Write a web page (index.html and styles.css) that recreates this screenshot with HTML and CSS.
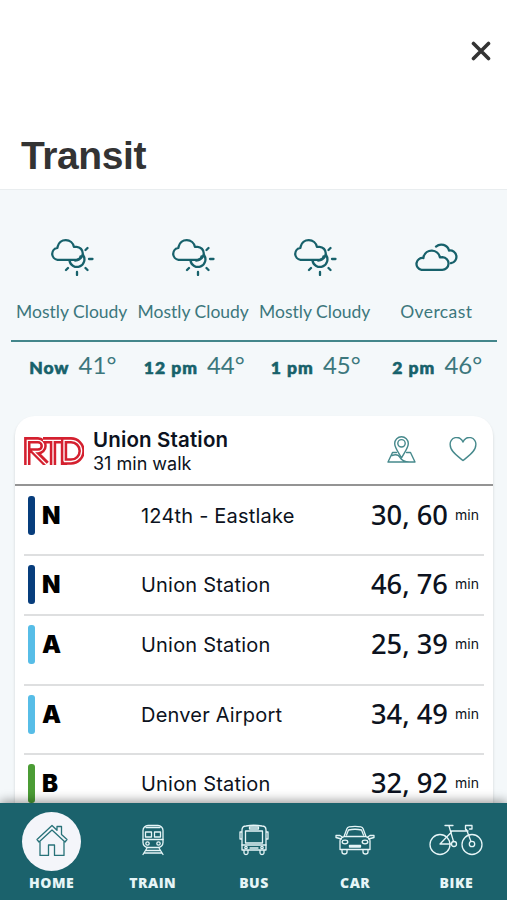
FILE: index.html
```html
<!DOCTYPE html>
<html lang="en">

<head>
    <meta charset="utf-8">
    <title>Transit</title>
    <link rel="stylesheet" href="styles.css">
</head>

<body>
    <!-- shared icons -->
    <svg class="sprite">
        <symbol id="mostlyCloudy" viewBox="0 0 44 38">
            <path d="M7.500 21.800H26a6.500 6.500 0 0 0 .5-13l-2.600.1A8.300 8.300 0 0 0 7.600 8.700l-.2 1.200A6 6 0 0 0 7.500 21.800z"/>
            <path d="M19.500 22.500a7.500 7.500 0 1 0 13.500-5.500M25 22.500q5-.5 5.500-4"/>
            <path d="M35.500 12l2-2M39 21h3.500M35.500 30l2 2M27 34v3M18 30l-2 2"/>
        </symbol>
        <symbol id="overcast" viewBox="0 0 44 38">
            <path d="M7.500 31.800H28a6.300 6.300 0 0 0 .5-12.600l-2.600.1A8.400 8.400 0 0 0 9.600 18.600l-.2 1.400A5.900 5.900 0 0 0 7.500 31.800z"/>
            <path d="M22 8.600A8 8 0 0 1 35 12.500 6.400 6.400 0 0 1 37 25.200"/>
        </symbol>
    </svg>

    <header class="topBar">
        <button class="closeButton" aria-label="Close">
            <svg viewBox="0 0 20 20"><path d="M2.500 2.500l15 15M17.500 2.500l-15 15"/></svg>
        </button>
        <h1>Transit</h1>
    </header>

    <main>
        <section class="weather">
            <div class="conditions">
                <div class="condition"><svg><use href="#mostlyCloudy"/></svg><span>Mostly Cloudy</span></div>
                <div class="condition"><svg><use href="#mostlyCloudy"/></svg><span>Mostly Cloudy</span></div>
                <div class="condition"><svg><use href="#mostlyCloudy"/></svg><span>Mostly Cloudy</span></div>
                <div class="condition overcast"><svg><use href="#overcast"/></svg><span>Overcast</span></div>
            </div>
            <div class="temps">
                <div class="temp"><b>Now</b><span>41°</span></div>
                <div class="temp"><b>12 pm</b><span>44°</span></div>
                <div class="temp"><b>1 pm</b><span>45°</span></div>
                <div class="temp"><b>2 pm</b><span>46°</span></div>
            </div>
        </section>

        <section class="station">
            <div class="stationHeader">
                <svg class="rtdLogo" viewBox="0 0 60 28" role="img" aria-label="RTD">
                    <path class="logoOuter" d="M3.300 28V3.300H14a5.600 5.600 0 0 1 0 11.200H10L22.500 27M19 3.300h18M29 3.300V28M40 28V3.300M37 3.300h10a10.500 10.500 0 0 1 0 21.200h-7"/>
                    <path class="logoInner" d="M3.300 28V3.300H14a5.600 5.600 0 0 1 0 11.200H9.500L23 28M19 3.300h18M29 3.300V28M40 24.500V3.300h7a10.500 10.500 0 0 1 0 21.200h-7"/>
                </svg>
                <div class="stationName">
                    <h2>Union Station</h2>
                    <p>31 min walk</p>
                </div>
                <svg class="mapIcon" viewBox="0 0 29 28">
                    <path d="M14.500 23C12 18 7.700 13 7.700 8.500a6.800 6.800 0 0 1 13.600 0C21.300 13 17 18 14.500 23z"/>
                    <circle cx="14.500" cy="8.300" r="3.700"/>
                    <path d="M9.500 17.500H5.500L1 27h27l-4.500-9.500h-4M5 20.500q6-2 8 2t9.500 4.500"/>
                </svg>
                <svg class="heartIcon" viewBox="0 0 28 25">
                    <path d="M14 23.500C9 19.500 1.200 14.500 1.200 8A6.600 6.600 0 0 1 14 5a6.600 6.600 0 0 1 12.800 3C26.800 14.500 19 19.500 14 23.500z"/>
                </svg>
            </div>
            <ul class="departures">
                <li class="lineN"><i></i><b>N</b><span class="dest">124th - Eastlake</span><span class="times">30, 60</span><small>min</small></li>
                <li class="lineN short"><i></i><b>N</b><span class="dest">Union Station</span><span class="times">46, 76</span><small>min</small></li>
                <li class="lineA tall"><i></i><b>A</b><span class="dest">Union Station</span><span class="times">25, 39</span><small>min</small></li>
                <li class="lineA"><i></i><b>A</b><span class="dest">Denver Airport</span><span class="times">34, 49</span><small>min</small></li>
                <li class="lineB"><i></i><b>B</b><span class="dest">Union Station</span><span class="times">32, 92</span><small>min</small></li>
            </ul>
        </section>
    </main>

    <nav class="tabBar">
        <a class="tab active">
            <span class="tabIcon"><svg width="32" height="32" viewBox="0 0 32 32">
                <path d="M1 15.500L16 1.500l5 4.800V2.500h4.500v8l5.500 5-2 2.500L16 6 3 18z"/>
                <path d="M4 18v13.500h8.500V21h6v10.500H28V18"/>
            </svg></span>
            HOME
        </a>
        <a class="tab">
            <span class="tabIcon"><svg width="24" height="32" viewBox="0 0 24 32">
                <rect x="2" y="1.500" width="20" height="22" rx="5"/>
                <path d="M5 3.500h14M2 15.500h20M6 24l-4 6.500M18 24l4 6.500M5 26.500h14M3.500 29h17"/>
                <rect x="4.500" y="8" width="6" height="5"/><rect x="13.500" y="8" width="6" height="5"/>
                <circle cx="6.500" cy="19.500" r="1.700"/><circle cx="17.500" cy="19.500" r="1.700"/>
            </svg></span>
            TRAIN
        </a>
        <a class="tab">
            <span class="tabIcon"><svg width="32" height="32" viewBox="0 0 32 32">
                <path d="M4 26V6q0-4 4-4 8-1.500 16 0 4 0 4 4v20zM4 8H2v7h2M28 8h2v7h-2M6 26v3q0 1.500 2 1.500t2-1.500v-3M22 26v3q0 1.500 2 1.500t2-1.500v-3"/>
                <rect x="7.500" y="7" width="17" height="12"/><rect x="11.500" y="3" width="9" height="2"/>
                <path d="M4 21h24M12 24h8"/><circle cx="8" cy="23.500" r="1.200"/><circle cx="24" cy="23.500" r="1.200"/>
            </svg></span>
            BUS
        </a>
        <a class="tab">
            <span class="tabIcon"><svg width="40" height="32" viewBox="0 0 40 32">
                <path d="M5 25.500V17q0-3 4-4.500l3-8q.6-1.500 2-1.700 6-1 12 0 1.400.2 2 1.700l3 8q4 1.500 4 4.500v8.500zM9 12.500h22M11.500 11l2-5q6.500-1.500 13 0l2 5M6.500 15L1 13.500v-2h4l3 2M33.500 15l5.500-1.500v-2h-4l-3 2"/>
                <path d="M7 26v2q0 2 2.500 2t2.500-2v-2M28 26v2q0 2 2.500 2t2.500-2v-2M14.500 21.500h11v1.500h-11z"/>
                <ellipse cx="10" cy="18" rx="2.800" ry="1.800"/><ellipse cx="30" cy="18" rx="2.800" ry="1.800"/>
            </svg></span>
            CAR
        </a>
        <a class="tab">
            <span class="tabIcon"><svg width="54" height="32" viewBox="0 0 54 32">
                <circle cx="11" cy="20.500" r="10"/><circle cx="43" cy="20.500" r="10"/>
                <circle cx="25" cy="20" r="2.500"/><circle cx="43" cy="20" r="2.700"/>
                <path d="M16 1.500h8M20 2l4.500 15.500M22.500 8L11 20h11.500M22 7h17M36.500 5.500V1.500H43V5h-2.500M37.500 5.500L42 17.500"/>
            </svg></span>
            BIKE
        </a>
    </nav>
</body>

</html>
```

FILE: styles.css
```css
* {
    box-sizing: border-box;
}

body {
    margin: 0;
    height: 900px;
    display: flex;
    flex-direction: column;
    overflow: hidden;
    background: #f4f8fa;
    color: #0c1220;
    font-family: "Inter", sans-serif;
}

h1, h2, p, ul {
    margin: 0;
    padding: 0;
}

svg {
    display: block;
    fill: none;
    stroke: currentColor;
    stroke-linecap: round;
    stroke-linejoin: round;
}

.sprite {
    display: none;
}

.topBar {
    flex: none;
    height: 190px;
    padding: 41px 16px 0 21px;
    background: #fff;
    border-bottom: 1px solid #e9edef;
    color: #333;
}

.closeButton {
    display: block;
    width: 20px;
    height: 20px;
    margin-left: auto;
    padding: 0;
    border: 0;
    background: none;
    color: #333;
}

.closeButton svg {
    stroke-width: 3.6;
}

.topBar h1 {
    margin-top: 72px;
    font: bold 39px/46px "Liberation Sans", sans-serif;
    letter-spacing: -0.4px;
}

main {
    flex: 1;
    min-height: 0;
    overflow: hidden;
}

.weather {
    margin: 48px 10px 0 11px;
    color: #17616b;
    font-family: Lato, sans-serif;
}

.conditions, .temps {
    display: grid;
    grid-template-columns: repeat(4, 1fr);
}

.conditions {
    height: 104px;
    border-bottom: 2px solid #43868b;
}

.condition {
    display: flex;
    flex-direction: column;
    align-items: center;
    gap: 24px;
    font-size: 17.5px;
    line-height: 24px;
    white-space: nowrap;
    color: #3c777d;
}

.overcast {
    letter-spacing: 0.4px;
}

.condition svg {
    width: 44px;
    height: 38px;
    color: #17616b;
    stroke-width: 2.3;
}

.temps {
    height: 48px;
}

.temp {
    display: flex;
    align-items: baseline;
    justify-content: center;
    gap: 9px;
    padding-left: 2px;
    line-height: 45px;
}

.temp b {
    font-size: 17.5px;
    font-weight: 900;
    letter-spacing: 1px;
    -webkit-text-stroke: 0.6px #17616b;
}

.temp span {
    font-size: 24px;
    color: #3c777d;
}

.station {
    margin: 26px 14px 0 15px;
    background: #fff;
    border-radius: 20px 20px 0 0;
    box-shadow: 0 2px 3px rgba(0, 0, 0, 0.15);
}

.stationHeader {
    display: flex;
    height: 70px;
    padding: 0 16px 0 9px;
    border-bottom: 2px solid #949494;
}

.rtdLogo {
    width: 60px;
    height: 28px;
    margin-top: 21px;
    stroke-linecap: butt;
    stroke-linejoin: miter;
}

.logoOuter {
    stroke: #d4202f;
    stroke-width: 6.4;
}

.logoInner {
    stroke: #fff;
    stroke-width: 1.3;
}

.stationName {
    margin: 11px auto 0 9px;
}

.stationName h2 {
    font-size: 20.5px;
    font-weight: 600;
    line-height: 26px;
    letter-spacing: 0.15px;
}

.stationName p {
    font-size: 18px;
    line-height: 22px;
}

.mapIcon {
    width: 29px;
    height: 28px;
    margin: 19px 33px 0 0;
    color: #46898c;
    stroke-width: 1.4;
}

.heartIcon {
    width: 28px;
    height: 25px;
    margin-top: 21px;
    color: #46898c;
    stroke-width: 1.4;
}

.departures {
    margin: 0 9px;
    padding-top: 1px;
    list-style: none;
}

.departures li {
    display: grid;
    grid-template-columns: 7px 106px 1fr auto 25px;
    height: 69px;
    padding: 9px 4px 0;
    border-bottom: 2px solid #dedfe0;
    line-height: 41px;
}

.departures li.short {
    height: 60px;
}

.departures li.tall {
    height: 70px;
}

.departures i {
    height: 39px;
    border-radius: 3px;
}

.lineN i {
    background: #073d7c;
}

.lineA i {
    background: #57bde7;
}

.lineB i {
    background: #4b9c35;
}

.departures b {
    padding-left: 7px;
    color: #000;
    font-size: 24px;
    font-weight: 900;
    line-height: 40px;
}

.dest {
    font-size: 20px;
    letter-spacing: 0.2px;
}

.times {
    margin-right: 7px;
    font: 500 27.3px/38px "Noto Sans", sans-serif;
}

.departures small {
    font-size: 14px;
    line-height: 38px;
}

.tabBar {
    position: relative;
    flex: none;
    display: grid;
    grid-template-columns: repeat(5, 1fr);
    height: 97px;
    padding: 9px 0 0 1px;
    background: #1b626c;
    box-shadow: 0 -2px 10px rgba(0, 0, 0, 0.4);
    color: #e6f5f7;
}

.tab {
    display: flex;
    flex-direction: column;
    align-items: center;
    font: 800 14px/24px "Open Sans", sans-serif;
    letter-spacing: 0.5px;
}

.tabIcon {
    display: flex;
    align-items: center;
    justify-content: center;
    width: 59px;
    height: 59px;
    border-radius: 50%;
}

.tabIcon svg {
    flex: none;
    margin-top: -3px;
    stroke-width: 1.3;
}

.active .tabIcon {
    background: #f4f5fa;
    color: #287279;
}
```
